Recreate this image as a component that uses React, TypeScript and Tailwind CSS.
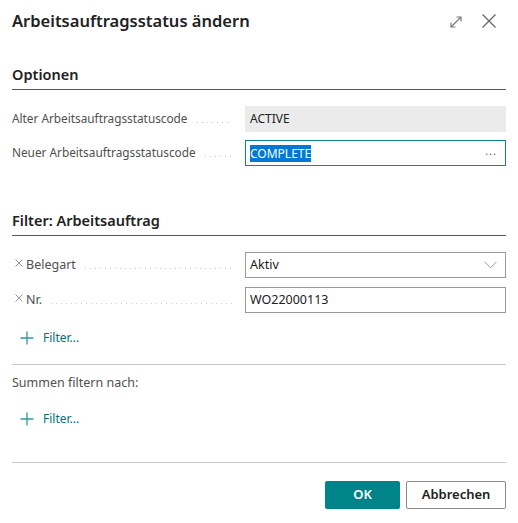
import React from "react";

const font = { fontFamily: '"Noto Sans", "Open Sans", sans-serif' };

function Leader() {
  return (
    <div className="flex-1 ml-[9px] mr-[13px] h-px translate-y-[3px] bg-[linear-gradient(to_right,#c9c9c9_1px,transparent_1px)] bg-[length:5px_1px] bg-repeat-x" />
  );
}

function XMark() {
  return (
    <svg width="8" height="8" viewBox="0 0 8 8" className="ml-[3px] mr-[3px] -mt-[4px]">
      <path d="M0.5 0.5L7.5 7.5M7.5 0.5L0.5 7.5" stroke="#8a8a8a" strokeWidth="0.9" />
    </svg>
  );
}

function PlusFilter() {
  return (
    <div className="flex items-center gap-[9px] pl-[8px] text-[#00717a] text-[12px]">
      <svg width="14" height="14" viewBox="0 0 14 14">
        <path d="M7 0.5V13.5M0.5 7H13.5" stroke="#2f9a9f" strokeWidth="1.3" />
      </svg>
      <span>Filter...</span>
    </div>
  );
}

export default function App() {
  return (
    <div className="w-[518px] h-[523px] bg-white px-3 text-[#323130] flex flex-col" style={font}>
      {/* header */}
      <div className="flex items-center h-[42px]">
        <div className="flex-1 text-[16.5px] font-semibold text-[#212121]">Arbeitsauftragsstatus ändern</div>
        <svg width="14" height="14" viewBox="0 0 14 14" className="mr-[18px] mt-[1px]">
          <path d="M2 12L12 2M7.5 2H12V6.5M2 7.5V12H6.5" stroke="#777" strokeWidth="1.1" fill="none" />
        </svg>
        <svg width="16" height="16" viewBox="0 0 16 16" className="mr-[9px]">
          <path d="M1.5 1.5L14.5 14.5M14.5 1.5L1.5 14.5" stroke="#666" strokeWidth="1.3" />
        </svg>
      </div>

      {/* Optionen */}
      <div className="mt-[21px] text-[14.5px] font-semibold text-[#212121] leading-[22px]">Optionen</div>
      <div className="mt-[4px] h-px bg-[#55555d]" />

      <div className="mt-[16px] flex items-center h-[26px]">
        <div className="w-[233px] flex items-center text-[11.8px] text-[#505050]">
          <span className="whitespace-nowrap">Alter Arbeitsauftragsstatuscode</span>
          <Leader />
        </div>
        <div className="flex-1 h-[26px] bg-[#ebebeb] flex items-center pl-[5px] text-[12px] text-[#212121]">ACTIVE</div>
      </div>
      <div className="mt-[8px] flex items-center h-[26px]">
        <div className="w-[233px] flex items-center text-[11.8px] text-[#505050]">
          <span className="whitespace-nowrap">Neuer Arbeitsauftragsstatuscode</span>
          <Leader />
        </div>
        <div className="flex-1 h-[26px] border border-[#13848a] flex items-center pl-[4px] pr-[8px] text-[12px]">
          <span className="bg-[#0078d7] text-white leading-[17px]">COMPLETE</span>
          <span className="flex-1" />
          <span className="text-[#555] text-[11px] tracking-[1px] -mt-[4px]">...</span>
        </div>
      </div>

      {/* Filter: Arbeitsauftrag */}
      <div className="mt-[43px] text-[14.5px] font-semibold text-[#212121] leading-[22px]">Filter: Arbeitsauftrag</div>
      <div className="mt-[4px] h-px bg-[#55555d]" />

      <div className="mt-[16px] flex items-center h-[26px]">
        <div className="w-[233px] flex items-center text-[12.5px] text-[#505050]">
          <XMark />
          <span className="whitespace-nowrap">Belegart</span>
          <Leader />
        </div>
        <div className="flex-1 h-[26px] border border-[#9a9a9a] flex items-center pl-[4px] pr-[8px] text-[12.5px] text-[#212121]">
          <span className="flex-1">Aktiv</span>
          <svg width="13" height="8" viewBox="0 0 13 8">
            <path d="M0.5 0.8L6.5 6.8L12.5 0.8" stroke="#999" strokeWidth="1" fill="none" />
          </svg>
        </div>
      </div>
      <div className="mt-[9px] flex items-center h-[26px]">
        <div className="w-[233px] flex items-center text-[12.5px] text-[#505050]">
          <XMark />
          <span className="whitespace-nowrap">Nr.</span>
          <Leader />
        </div>
        <div className="flex-1 h-[26px] border border-[#9a9a9a] flex items-center pl-[4px] text-[12.5px] text-[#212121]">WO22000113</div>
      </div>

      <div className="mt-[16px]">
        <PlusFilter />
      </div>

      <div className="mt-[17px] h-px bg-[#c8c8c8]" />
      <div className="mt-[9px] text-[12.5px] text-[#505050] leading-[18px]">Summen filtern nach:</div>
      <div className="mt-[18px]">
        <PlusFilter />
      </div>

      <div className="mt-[34px] h-px bg-[#c8c8c8]" />

      <div className="mt-[18px] flex justify-end gap-[6px]">
        <button className="w-[75px] h-[28px] bg-[#008489] text-white text-[13px] font-semibold rounded-[2px]">OK</button>
        <button className="w-[100px] h-[28px] border border-[#8a8a8a] bg-white text-[#212121] text-[13px] font-semibold rounded-[2px]">Abbrechen</button>
      </div>
    </div>
  );
}
